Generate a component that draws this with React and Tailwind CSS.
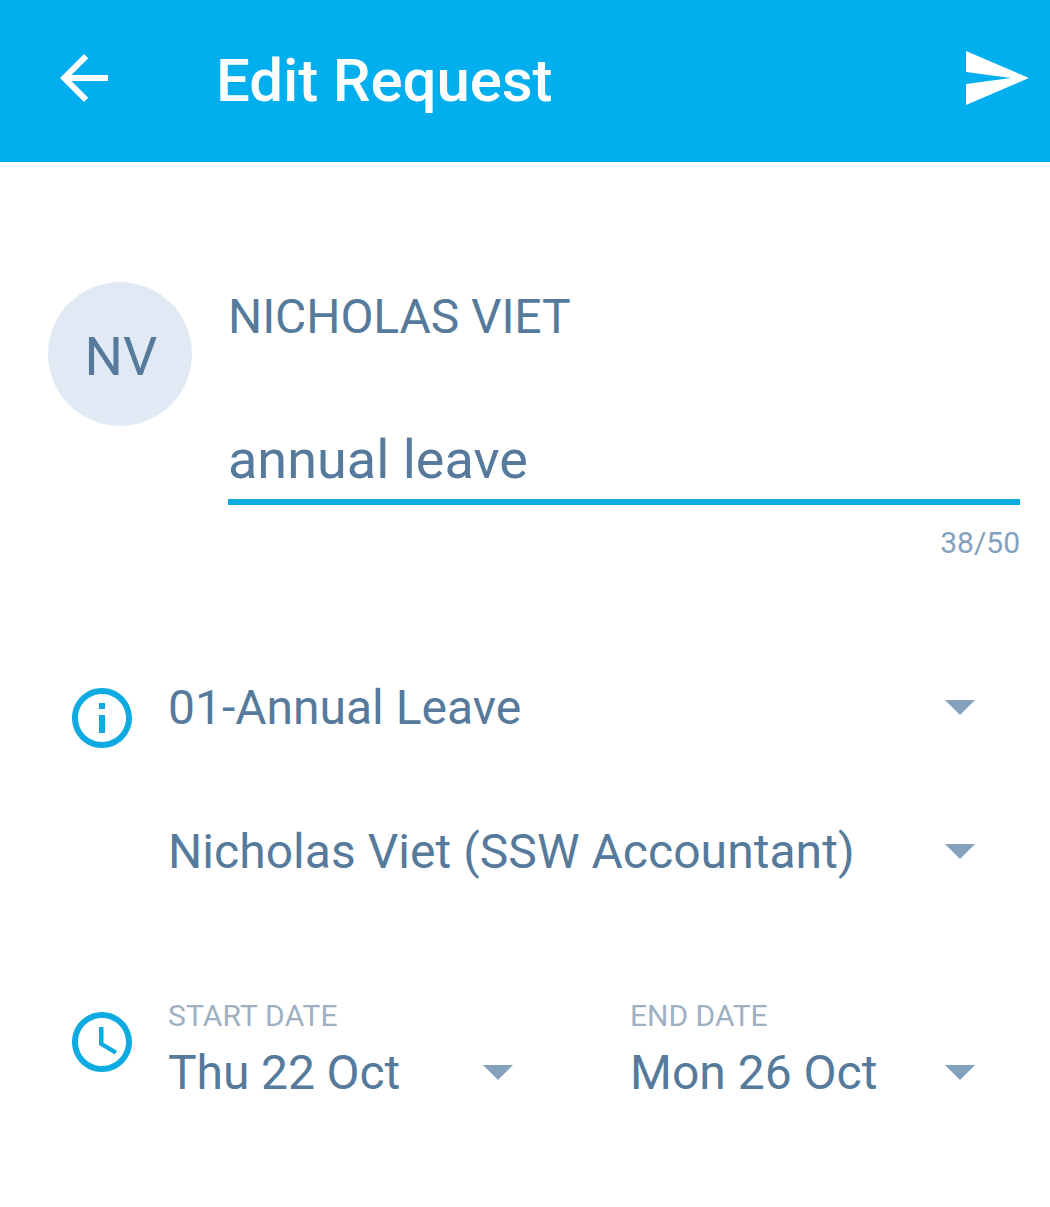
import React from "react";

function Caret({ className = "" }) {
  return (
    <svg viewBox="0 0 30 15" className={`mb-[2px] h-[15px] w-[30px] shrink-0 fill-[#83a1bc] ${className}`}>
      <path d="M0 0h30L15 15z" />
    </svg>
  );
}

function Header() {
  return (
    <header className="flex h-[162px] items-start bg-[#01aeee] text-white">
      <svg viewBox="4 4 16 16" className="mt-[54px] ml-[60px] h-12 w-12 fill-white">
        <path d="M20 11H7.83l5.59-5.59L12 4l-8 8 8 8 1.41-1.41L7.83 13H20v-2z" />
      </svg>
      <h1 className="mt-[46px] ml-[108px] text-[60px] leading-[70px] font-medium tracking-[-0.1px] whitespace-nowrap">Edit Request</h1>
      <svg viewBox="0 0 63 54" className="mt-[51px] mr-[21px] ml-auto h-[54px] w-[63px] fill-white">
        <path d="M0 54L63 27L0 0V21L45 27L0 33z" />
      </svg>
    </header>
  );
}

export default function App() {
  return (
    <main className="h-[1207px] w-[1050px] overflow-hidden bg-white font-[Roboto,sans-serif] text-[48px] leading-[56px] text-[#557a9b]">
      <Header />
      <section className="flex pt-[120px] pr-[30px] pl-12">
        <div className="flex h-36 w-36 shrink-0 items-center justify-center rounded-full bg-[#e1eaf4] pt-1.5 pl-0.5 text-[54px]">NV</div>
        <div className="ml-9 flex-1">
          <div className="mt-[7px] tracking-[-0.1px]">NICHOLAS VIET</div>
          <div className="mt-[83px] h-[77px] border-b-6 border-[#0dabe2] text-[54px] leading-[64px]">annual leave</div>
          <div className="mt-[20px] text-right text-[30px] leading-9 text-[#83a1bc]">38/50</div>
        </div>
      </section>
      <section className="mt-[119px] flex pr-[75px] pl-[72px]">
        <svg viewBox="2 2 20 20" className="mt-[8px] h-[60px] w-[60px] shrink-0 fill-[#0dabe2]">
          <path d="M11 7h2v2h-2zm0 4h2v6h-2zm1-9C6.48 2 2 6.48 2 12s4.48 10 10 10 10-4.48 10-10S17.52 2 12 2zm0 18c-4.41 0-8-3.59-8-8s3.59-8 8-8 8 3.59 8 8-3.59 8-8 8z" />
        </svg>
        <div className="ml-9 flex flex-1 flex-col gap-[88px]">
          <div className="flex items-center justify-between">01-Annual Leave<Caret /></div>
          <div className="flex items-center justify-between tracking-[0.05px] whitespace-nowrap">Nicholas Viet (SSW Accountant)<Caret /></div>
        </div>
      </section>
      <section className="mt-[118px] flex pr-[75px] pl-[72px]">
        <svg viewBox="2 2 20 20" className="mt-[14px] h-[60px] w-[60px] shrink-0 fill-[#0dabe2]">
          <path d="M11.99 2C6.47 2 2 6.48 2 12s4.47 10 9.99 10C17.52 22 22 17.52 22 12S17.52 2 11.99 2zM12 20c-4.42 0-8-3.58-8-8s3.58-8 8-8 8 3.58 8 8-3.58 8-8 8zm.5-13H11v6l5.25 3.15.75-1.23-4.5-2.67z" />
        </svg>
        <div className="ml-9 grid flex-1 grid-cols-[345px_345px] gap-[117px]">
          <div>
            <div className="text-[30px] leading-9 tracking-[0.15px] text-[#9eb0c1]">START DATE</div>
            <div className="mt-[11px] flex items-center justify-between tracking-[-0.1px]">Thu 22 Oct<Caret /></div>
          </div>
          <div>
            <div className="text-[30px] leading-9 text-[#9eb0c1]">END DATE</div>
            <div className="mt-[11px] flex items-center justify-between">Mon 26 Oct<Caret /></div>
          </div>
        </div>
      </section>
    </main>
  );
}
